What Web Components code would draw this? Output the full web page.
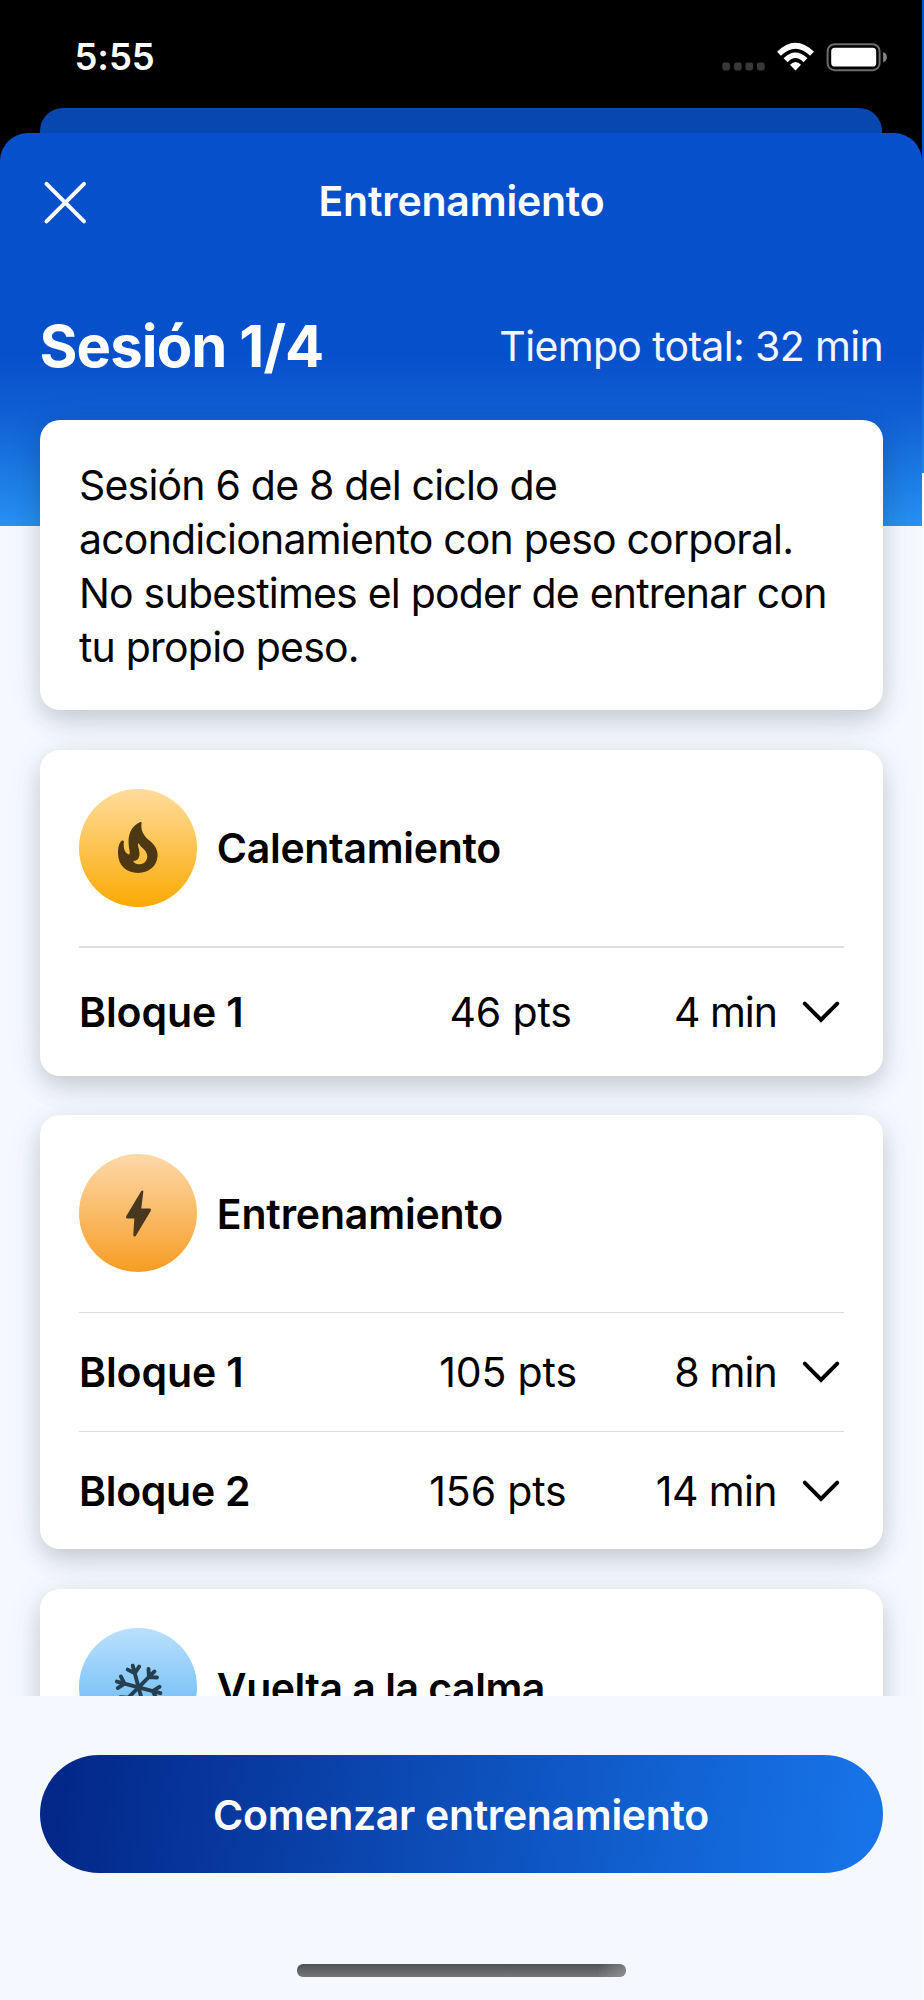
<!DOCTYPE html>
<html lang="es">
<head>
<meta charset="utf-8">
<title>Entrenamiento</title>
<style>
  html, body { margin: 0; padding: 0; }
  body {
    width: 924px; height: 2000px; overflow: hidden;
    font-family: Inter, "Liberation Sans", sans-serif;
    color: #050505;
    background: linear-gradient(#0750cb 0 330px, #1e88ec 473px, #f8fbff 473px);
  }
</style>
</head>
<body>
<workout-app>
  <status-bar slot="status" time="5:55"></status-bar>
  <sheet-nav slot="nav">Entrenamiento</sheet-nav>
  <session-summary slot="summary">Sesión 1/4<span slot="total">Tiempo total: 32 min</span></session-summary>
  <app-card style="height:290px"><card-note>Sesión 6 de 8 del ciclo de acondicionamiento con peso corporal. No subestimes el poder de entrenar con tu propio peso.</card-note></app-card>
  <app-card style="height:326px">
    <phase-header icon="flame" style="letter-spacing:-.3px">Calentamiento</phase-header>
    <block-row style="--h:130px;--rule:2px;--shift:68.2px;--ts:-1px">Bloque 1<span slot="points">46 pts</span><span slot="time">4 min</span></block-row>
  </app-card>
  <app-card style="height:434.3px">
    <phase-header icon="bolt" style="letter-spacing:-.18px">Entrenamiento</phase-header>
    <block-row style="--h:119px;--rule:1.4px;--shift:63.1px;--ts:-.85px">Bloque 1<span slot="points">105 pts</span><span slot="time">8 min</span></block-row>
    <block-row style="--h:118px;--rule:1.4px;--shift:73.4px;--ts:-.6px;--ns:-.3px">Bloque 2<span slot="points">156 pts</span><span slot="time">14 min</span></block-row>
  </app-card>
  <app-card style="height:326px">
    <phase-header icon="snow" style="letter-spacing:-.5px">Vuelta a la calma</phase-header>
  </app-card>
  <start-button slot="action">Comenzar entrenamiento</start-button>
</workout-app>

<script>
const define = (name, html, setup) => {
  const tpl = document.createElement('template');
  tpl.innerHTML = html;
  customElements.define(name, class extends HTMLElement {
    constructor() {
      super();
      this.attachShadow({ mode: 'open' }).append(tpl.content.cloneNode(true));
    }
    connectedCallback() { if (setup) setup(this, this.shadowRoot); }
  });
};

define('workout-app', `
<style>
  :host { display: flex; flex-direction: column; width: 922px; height: 2000px; background: #000; overflow: hidden; }
  .behind { flex: none; height: 25px; margin: 0 40px; background: #0747b0; border-radius: 23px 23px 0 0; }
  .sheet { flex: 1; min-height: 0; display: flex; flex-direction: column; border-radius: 28px 28px 0 0; overflow: hidden;
    background: linear-gradient(#0750cb 0 222px, #1160d4 284px, #2692f1 393px, #f5f9ff 393px); }
  .scroll { height: 1563px; flex: none; overflow: hidden; display: flex; flex-direction: column; }
  .cards { display: flex; flex-direction: column; gap: 39.6px; padding: 0 39px 0 39.5px; }
  ::slotted(app-card) { flex: none; }
  footer { flex: 1; background: #f5f9ff; display: flex; flex-direction: column; align-items: center; padding-top: 59px; }
  .home { width: 329px; height: 12.5px; margin-top: 91px; border-radius: 6px;
    background: linear-gradient(100deg, transparent 91%, #a5a6aa88 100%), linear-gradient(#505255, #747579); }
</style>
<slot name="status"></slot>
<div class="behind"></div>
<div class="sheet">
  <div class="scroll">
    <slot name="nav"></slot>
    <slot name="summary"></slot>
    <div class="cards"><slot></slot></div>
  </div>
  <footer><slot name="action"></slot><div class="home"></div></footer>
</div>`);

define('status-bar', `
<style>
  :host { display: flex; flex: none; align-items: center; height: 108px; box-sizing: border-box;
    padding: 5.5px 35px 0 74.5px; color: #fff; font-size: 36.5px; font-weight: 600; letter-spacing: -.1px; }
  svg { margin-left: auto; }
</style>
<span></span>
<svg width="166" height="32" viewBox="721 40.5 166 32">
  <g fill="#383838"><rect x="722.3" y="62" width="7.8" height="8" rx="2.4"/><rect x="733.9" y="62" width="7.8" height="8" rx="2.4"/><rect x="745.4" y="62" width="7.8" height="8" rx="2.4"/><rect x="756.9" y="62" width="7.8" height="8" rx="2.4"/></g>
  <g fill="none" stroke="#fff" stroke-width="5.6">
    <path d="M779 53.2 Q795.5 37.2 812 53.2"/><path d="M785.6 59.8 Q795.5 49.8 805.4 59.8"/>
  </g>
  <path d="M795.5 70 L790 64.2 Q795.5 58.8 801 64.2 Z" fill="#fff"/>
  <rect x="827.6" y="43.7" width="52" height="26" rx="7" fill="none" stroke="#6c6c6c" stroke-width="2"/>
  <rect x="831.2" y="47.3" width="45" height="18.7" rx="3.6" fill="#fff"/>
  <path d="M883.2 51.6 Q886.8 53 886.8 56.8 Q886.8 60.6 883.2 62 Z" fill="#858585"/>
</svg>`, (el, root) => { root.querySelector('span').textContent = el.getAttribute('time'); });

define('sheet-nav', `
<style>
  :host { display: grid; flex: none; grid-template-columns: 100px 1fr 100px; align-items: center; height: 138px;
    color: #fff; font-size: 41px; font-weight: 600; letter-spacing: -.2px; text-align: center; }
  svg { margin-left: 43px; display: block; }
  span { margin-top: -2px; padding-left: 1px; }
</style>
<svg width="45" height="45" viewBox="0 0 45 45" fill="none" stroke="#fff" stroke-width="4" stroke-linecap="round"><path d="M3.5 3.8 L41 41.3 M41 3.8 L3.5 41.3"/></svg>
<span><slot></slot></span>`);

define('session-summary', `
<style>
  :host { display: flex; flex: none; justify-content: space-between; align-items: center; height: 149px;
    padding: 0 39px 0 39.5px; color: #fff; }
  b { font-size: 58px; font-weight: 700; letter-spacing: -.9px; }
  span { font-size: 41px; letter-spacing: -.66px; color: #f2f6ff; }
</style>
<b><slot></slot></b><span><slot name="total"></slot></span>`);

define('app-card', `
<style>
  :host { display: block; box-sizing: border-box; padding: 0 39px 0 39.5px; border-radius: 20px; background: #fff;
    box-shadow: 0 10px 24px rgba(0,0,0,.17), 0 4px 44px rgba(30,50,110,.06); }
</style>
<slot></slot>`);

define('card-note', `
<style>
  :host { display: block; padding-top: 37.6px; font-size: 41px; line-height: 54px; letter-spacing: -.8px; }
</style>
<slot></slot>`);

const ICONS = {
  flame: ['#ffdc9c', '#fbaa03', `<svg width="39.6" height="51" viewBox="343 246 115 153" preserveAspectRatio="none" fill="#4c3914"><path fill-rule="evenodd" d="M409 246 C412 246 412 249 411 253 C409 272 419 289 436 303 C451 316 459 331 458 349 C456 379 432 399 401 399 C368 399 343 377 343 340 C343 322 346 309 353 303 C357 300 361 303 360 308 C358 323 362 336 371 342 C375 345 378 342 377 335 C369 296 374 264 406 247 Z M403 310 C400 312 401 316 402 321 C405 331 406 338 405 347 C404 356 397 362 390 362 C386 363 388 367 392 369 C396 372 401 373 406 373 C420 372 428 362 428 349 C427 333 417 327 411 321 C407 317 405 313 403 310 Z"/></svg>`],
  bolt: ['#fdd9aa', '#f79d25', `<svg width="25" height="47" viewBox="364 272 72 137" preserveAspectRatio="none" fill="#4a3720"><path d="M414 276 Q413 271 408 275 L365 348 Q362 355 369 355 L388 355 L385 403 Q386 410 392 406 L435 333 Q438 326 431 326 L408 326 Z"/></svg>`],
  snow: ['#b9e0fd', '#55b1f5', `<svg width="52" height="52" viewBox="-26 -26 52 52" fill="none" stroke="#263f50" stroke-width="3.9" stroke-linecap="round" stroke-linejoin="round"><g transform="translate(.6 .4) rotate(-15)"></g></svg>`]
};

define('phase-header', `
<style>
  :host { display: flex; align-items: center; gap: 19.8px; height: 196.4px; font-size: 41px; font-weight: 600; color: #000; white-space: nowrap; }
  i { flex: none; width: 118px; height: 118px; border-radius: 50%; display: grid; place-items: center; }
  span { padding-top: 1.4px; }
</style>
<i></i><span><slot></slot></span>`, (el, root) => {
  const [top, bottom, svg] = ICONS[el.getAttribute('icon')];
  const disc = root.querySelector('i');
  disc.style.background = `linear-gradient(${top}, ${bottom})`;
  disc.innerHTML = svg;
  const flake = disc.querySelector('g');
  if (flake) {
    flake.innerHTML = [0, 60, 120, 180, 240, 300].map(a =>
      `<path transform="rotate(${a})" d="M0 0 V-22.5 M-6 -20 L0 -14.6 L6 -20"/>`).join('');
  }
});

define('block-row', `
<style>
  :host { display: flex; align-items: center; box-sizing: border-box; height: var(--h); border-top: var(--rule) solid #dcdcdc;
    font-size: 41px; white-space: nowrap; color: #000; }
  b { font-weight: 600; margin-right: auto; letter-spacing: var(--ns, -.1px); }
  .points { margin-right: var(--shift); letter-spacing: -.15px; }
  .time { width: 137px; text-align: right; letter-spacing: var(--ts); }
  b, .points, .time { padding-top: 1px; }
  svg { margin: 1px 3px 0 24px; }
</style>
<b><slot></slot></b>
<span class="points"><slot name="points"></slot></span>
<span class="time"><slot name="time"></slot></span>
<svg width="40" height="24" viewBox="0 0 40 24" fill="none" stroke="#000" stroke-width="4" stroke-linecap="round"><path d="M3.8 3.6 L20 19.8 L36.2 3.6"/></svg>`);

define('start-button', `
<style>
  :host { display: flex; align-items: center; justify-content: center; flex: none; width: 843px; height: 118px; border-radius: 59px;
    box-sizing: border-box; padding-top: 1.5px;
    background: linear-gradient(97deg, #03288a 3%, #0a43ab 36%, #1160d0 72%, #1774e8 98%);
    color: #fff; font-size: 41px; font-weight: 600; letter-spacing: -.32px; }
</style>
<slot></slot>`);
</script>
</body>
</html>
